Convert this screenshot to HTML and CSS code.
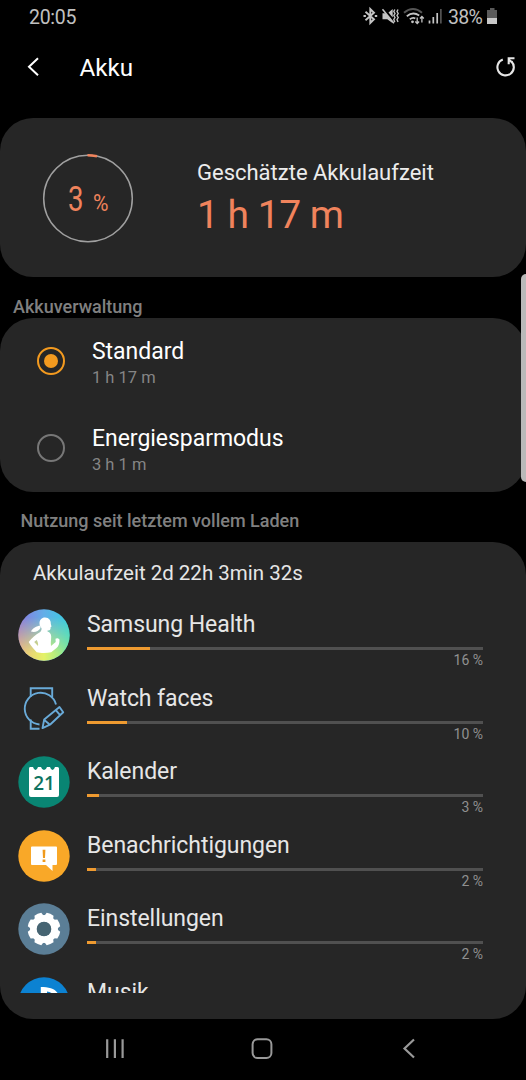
FILE: index.html
```html
<!DOCTYPE html>
<html lang="de">
<head>
    <meta charset="UTF-8">
    <meta name="viewport" content="width=device-width, initial-scale=1.0">
    <title>Akku</title>
    <link rel="stylesheet" href="styles.css">
</head>
<body>
    <div class="statusbar">
        <span class="clock">20:05</span>
        <svg class="status-icons" width="80" height="20" viewBox="0 0 80 20" fill="none" stroke="#c4c4c4">
            <!-- bluetooth -->
            <path d="M3.500 5.800 12 13.200 8.300 17V3l3.700 3.800-8.500 7.400" stroke-width="1.900"/>
            <path d="M1.500 8.900h2.400v2.200H1.500zM12.800 8.900h2.400v2.200h-2.400z" fill="#c4c4c4" stroke="none"/>
            <!-- muted, vibrating -->
            <path d="M20.500 7.300h3l7.200 8.200v1.800l-5.400-4h-4.800zM26.500 6.500l4.200-3.500v8.500z" fill="#c4c4c4" stroke="none"/>
            <path d="M20.500 3.300 32 17.200" stroke-width="1.500"/>
            <path d="m32.800 3.500-1 2 1.200 2-1.200 2 1.200 2-1.200 2 1 2.500M36 3.500l-1 2 1.200 2-1.200 2 1.200 2-1.200 2 1 2.500" stroke-width="1.400"/>
            <!-- wifi -->
            <path d="M42 6.800q9-7.500 18 0" stroke="#555" stroke-width="2"/>
            <path d="M44.800 10.200q6.200-5 12.400-.6M47.800 13.300q3-2.300 5.500-.8" stroke-width="1.800"/>
            <circle cx="50.500" cy="15.800" r="1.400" fill="#c4c4c4" stroke="none"/>
            <path d="M55.200 11.500v6M53.300 15.500l1.900 2 1.900-2M59.900 16.500v-6M58 12.500l1.900-2 1.900 2" stroke-width="1.300"/>
            <!-- signal -->
            <path d="M67.500 17.500v-3M71.300 17.500v-6.500M75.200 17.500V7" stroke-width="1.700"/>
            <path d="M78.900 17.500V3" stroke="#666" stroke-width="1.400"/>
        </svg>
        <span class="level">38%</span>
        <svg class="battery" width="10" height="16" viewBox="0 0 10 16">
            <path d="M3 0h4.500v2H10v8H0V2h3z" fill="#5a5a5a"/>
            <path d="M0 10h10v6H0z" fill="#c8c8c8"/>
        </svg>
    </div>

    <header class="header">
        <svg class="back" width="14" height="20" viewBox="0 0 14 20">
            <path d="M12 1.200 3 9.700l9 8.500" fill="none" stroke="#fff" stroke-width="2"/>
        </svg>
        <h1>Akku</h1>
        <svg class="reload" width="20" height="20" viewBox="0 0 20 20">
            <path d="M6.800 2.500A8.200 8.200 0 1 0 15.300 4.300" fill="none" stroke="#e6e6e6" stroke-width="2.100"/>
            <path d="M11.700 1.300h6.800M12.700.3v6.900M12.700 2.500l3.800 3.300" fill="none" stroke="#e6e6e6" stroke-width="2.100"/>
        </svg>
    </header>

    <section class="card summary">
        <svg class="ring" width="92" height="90" viewBox="0 0 92 90">
            <ellipse cx="46" cy="45.500" rx="44.300" ry="43.200" fill="none" stroke="#a0a0a0" stroke-width="1.500"/>
            <path d="M45.500 2.300q4.500 0 9.500 1" fill="none" stroke="#f0835c" stroke-width="2.600"/>
            <text x="26" y="57.500" font-size="35" textLength="15.500" lengthAdjust="spacingAndGlyphs">3</text>
            <text x="51" y="57.500" font-size="23" textLength="15.500" lengthAdjust="spacingAndGlyphs">%</text>
        </svg>
        <div class="estimate">
            <p class="estimate-label">Geschätzte Akkulaufzeit</p>
            <p class="estimate-time">1 h 17 m</p>
        </div>
    </section>

    <h2 class="section-title">Akkuverwaltung</h2>
    <section class="card modes">
        <div class="mode">
            <span class="radio checked"></span>
            <div>
                <p class="mode-name">Standard</p>
                <p class="mode-time">1 h 17 m</p>
            </div>
        </div>
        <div class="mode">
            <span class="radio"></span>
            <div>
                <p class="mode-name">Energiesparmodus</p>
                <p class="mode-time">3 h 1 m</p>
            </div>
        </div>
    </section>

    <h2 class="section-title usage-title">Nutzung seit letztem vollem Laden</h2>
    <section class="card usage">
        <p class="runtime">Akkulaufzeit 2d 22h 3min 32s</p>
        <div class="apps">
            <div class="app">
                <svg class="icon" viewBox="0 0 52 52">
                    <defs>
                        <linearGradient id="sky" x1="0" y1="0" x2="1" y2="0">
                            <stop offset="0" stop-color="#8a78e0"/>
                            <stop offset=".5" stop-color="#63aee8"/>
                            <stop offset="1" stop-color="#35cfe2"/>
                        </linearGradient>
                        <linearGradient id="meadow" x1="0" y1="0" x2="1" y2="0">
                            <stop offset="0" stop-color="#f0bd7c"/>
                            <stop offset=".5" stop-color="#e4f268"/>
                            <stop offset="1" stop-color="#7ce69a"/>
                        </linearGradient>
                        <linearGradient id="fade" x1="0" y1="0" x2="0" y2="1">
                            <stop offset=".15" stop-color="#000"/>
                            <stop offset=".85" stop-color="#fff"/>
                        </linearGradient>
                        <mask id="lower"><path d="M0 0h52v52H0z" fill="url(#fade)"/></mask>
                    </defs>
                    <circle cx="26" cy="26" r="25.700" fill="url(#sky)"/>
                    <circle cx="26" cy="26" r="25.700" fill="url(#meadow)" mask="url(#lower)"/>
                    <!-- runner: head, ponytail, torso with both arms -->
                    <g fill="#fff">
                        <path d="M27 8.500c4.200 0 6 3 5.800 6.500l.7 2.500-.9.800c.2 2.500-.8 3.500-3.400 3.200l-5-1.500c-1.500-2-2.700-3.500-2.700-5.500 0-3.500 2.200-6 5.500-6z"/>
                        <path d="M22.500 16.500c-4 .5-8 2.500-9.500 6 3.500 1.200 7.500 0 9.500-3.500z"/>
                        <path fill-rule="evenodd" d="M23.500 17h6v5.500c2.500 1 3.700 2.500 3.700 5 0 3.500-.7 6-.2 9.500l4.700-4-.2-3.200q2-1.500 4 .6c0 4-.7 6.500-3 8.500l-5.300 4.300c-4.500 1-10.500 1-14.500 0-3-3-6-6.500-8-10.200 3.300-4.300 7-7.500 10.800-9.500 2-1 2.500-3.500 2-6.500zM18.700 31l-2.500 2 3.800 4c.5-2-.2-4-1.300-6z"/>
                    </g>
                </svg>
                <div class="app-body">
                    <p class="app-name">Samsung Health</p>
                    <div class="bar"><div class="fill" style="width: 16%"></div></div>
                    <p class="percent">16 %</p>
                </div>
            </div>
            <div class="app">
                <svg class="icon" viewBox="0 0 52 52" fill="none" stroke="#69aad8" stroke-width="1.900">
                    <path d="M12.700 14V5.300h21.500V14M12.700 36.500v9.300H21.500"/>
                    <path d="M21.500 41.500A15.900 15.900 0 1 1 38 21.500"/>
                    <path d="m41.500 24 3.700 5.300-12.700 12-8 3.800 1.700-8.700zM38 27.300l4.300 5M26.300 37l5.700 4.700" stroke-linejoin="round"/>
                </svg>
                <div class="app-body">
                    <p class="app-name">Watch faces</p>
                    <div class="bar"><div class="fill" style="width: 10%"></div></div>
                    <p class="percent">10 %</p>
                </div>
            </div>
            <div class="app">
                <svg class="icon" viewBox="0 0 52 52">
                    <circle cx="26" cy="26" r="25.700" fill="#098573"/>
                    <path d="M12 11h3q1 3 2.500 3t2.500-3h3q1 3 3 3t3-3h3q1 3 2.500 3t2.500-3h2.500q1.500 0 1.500 1.500v26.500q0 2-2 2H13q-2 0-2-2V12.500q0-1.500 1-1.500z" fill="#fff"/>
                    <text class="day" x="26" y="34" text-anchor="middle">21</text>
                </svg>
                <div class="app-body">
                    <p class="app-name">Kalender</p>
                    <div class="bar"><div class="fill" style="width: 3%"></div></div>
                    <p class="percent">3 %</p>
                </div>
            </div>
            <div class="app">
                <svg class="icon" viewBox="0 0 52 52">
                    <circle cx="26" cy="26" r="25.700" fill="#f9a828"/>
                    <path d="M14 16.500h24q1 0 1 1V34q0 1-1 1h-3.500v6L28 35H14q-1 0-1-1V17.500q0-1 1-1z" fill="#fff"/>
                    <path d="M24.600 19.800h2.800l-.4 8.200h-2zM24.600 29.500h2.800v2.600h-2.800z" fill="#f09a1c"/>
                </svg>
                <div class="app-body">
                    <p class="app-name">Benachrichtigungen</p>
                    <div class="bar"><div class="fill" style="width: 2.200%"></div></div>
                    <p class="percent">2 %</p>
                </div>
            </div>
            <div class="app">
                <svg class="icon" viewBox="0 0 52 52">
                    <circle cx="26" cy="26" r="25.700" fill="#5b7e96"/>
                    <circle cx="26" cy="26" r="10.500" fill="none" stroke="#fff" stroke-width="7"/>
                    <g fill="#fff">
                        <path id="tooth" d="M21.300 13.500 22.300 10q3.700-.9 7.400 0l1 3.500z" transform="rotate(22.500 26 26)"/>
                        <use href="#tooth" transform="rotate(45 26 26)"/>
                        <use href="#tooth" transform="rotate(90 26 26)"/>
                        <use href="#tooth" transform="rotate(135 26 26)"/>
                        <use href="#tooth" transform="rotate(180 26 26)"/>
                        <use href="#tooth" transform="rotate(225 26 26)"/>
                        <use href="#tooth" transform="rotate(270 26 26)"/>
                        <use href="#tooth" transform="rotate(315 26 26)"/>
                    </g>
                    <circle cx="26" cy="26" r="7.300" fill="#466472"/>
                </svg>
                <div class="app-body">
                    <p class="app-name">Einstellungen</p>
                    <div class="bar"><div class="fill" style="width: 2.200%"></div></div>
                    <p class="percent">2 %</p>
                </div>
            </div>
            <div class="app">
                <svg class="icon" viewBox="0 0 52 52">
                    <circle cx="26" cy="26" r="25.700" fill="#0c82d2"/>
                    <path d="M22.800 34V10c9 0 16 2 18.200 9h-4.500c-1.500-2.500-4-4-7.500-4.500v19.500z" fill="#fff"/>
                </svg>
                <div class="app-body">
                    <p class="app-name">Musik</p>
                    <div class="bar"><div class="fill" style="width: 2%"></div></div>
                </div>
            </div>
        </div>
    </section>

    <nav class="navbar">
        <svg width="20" height="22" viewBox="0 0 20 22">
            <path d="M2.200 1.200v18.800M9.900 1.200v18.800M17.600 1.200v18.800" stroke="#999" stroke-width="2.200"/>
        </svg>
        <svg width="22" height="22" viewBox="0 0 22 22">
            <rect x="1.600" y="1.200" width="18.800" height="18.800" rx="5" fill="none" stroke="#999" stroke-width="2"/>
        </svg>
        <svg width="14" height="22" viewBox="0 0 14 22">
            <path d="M12 1.500 2.500 10.500l9.500 9" fill="none" stroke="#999" stroke-width="2.200"/>
        </svg>
    </nav>

    <div class="edge-handle"></div>
</body>
</html>
```

FILE: styles.css
```css
* {
    box-sizing: border-box;
}

body {
    margin: 0;
    width: 526px;
    height: 1080px;
    overflow: hidden;
    position: relative;
    background-color: #000;
    color: #fff;
    font-family: Roboto, "Noto Sans", sans-serif;
}

h1, h2, p {
    margin: 0;
    font-weight: 400;
    white-space: nowrap;
}

.statusbar {
    height: 33px;
    padding: 1px 29px 0 29px;
    display: flex;
    align-items: center;
    color: #c0c0c0;
    font-size: 19.500px;
}

.clock {
    letter-spacing: -0.3px;
}

.status-icons {
    margin-left: auto;
    margin-right: 6px;
    margin-top: -2px;
}

.level {
    letter-spacing: -0.7px;
}

.battery {
    margin-left: 5px;
    margin-top: -2px;
}

.header {
    height: 67px;
    padding-left: 26px;
    padding-right: 10.500px;
    display: flex;
    align-items: center;
}

.header h1 {
    margin-left: 39.500px;
    font-size: 24.200px;
    line-height: 28px;
    padding-top: 2px;
}

.reload {
    margin-left: auto;
}

.card {
    background-color: #262626;
    border-radius: 33px;
}

.summary {
    height: 159px;
    margin-top: 18px;
    padding-left: 42.200px;
    display: flex;
    align-items: center;
}

.ring text {
    fill: #f0835c;
}

.estimate {
    margin-left: 62.800px;
    padding-top: 5px;
}

.estimate-label {
    font-size: 22px;
    line-height: 30px;
    color: #ececec;
}

.estimate-time {
    font-size: 39px;
    line-height: 54px;
    letter-spacing: -0.500px;
    color: #f0835c;
}

.section-title {
    height: 41px;
    padding: 18px 0 0 13px;
    font-size: 18px;
    font-weight: 500;
    line-height: 24px;
    color: #808080;
}

.modes {
    height: 173.500px;
}

.mode {
    height: 87px;
    padding: 19px 0 0 37px;
    display: flex;
    gap: 27px;
}

.mode-name {
    font-size: 23px;
    line-height: 29px;
    letter-spacing: -0.04px;
}

.mode-time {
    font-size: 16.500px;
    line-height: 23px;
    color: #858585;
}

.radio {
    width: 28px;
    height: 28px;
    margin-top: 10px;
    border: 2px solid #777;
    border-radius: 50%;
    display: grid;
    place-items: center;
}

.radio.checked {
    border-color: #f39a1f;
}

.radio.checked::after {
    content: "";
    width: 14px;
    height: 14px;
    border-radius: 50%;
    background-color: #f39a1f;
}

.usage-title {
    height: 50.500px;
    padding: 17px 0 0 20.500px;
}

.usage {
    height: 476.500px;
    padding-top: 19px;
}

.runtime {
    padding-left: 33px;
    font-size: 20.500px;
    line-height: 25px;
    color: #e6e6e6;
}

.apps {
    height: 407px;
    padding-top: 23px;
    overflow: hidden;
}

.app {
    height: 73.500px;
    padding-left: 17.500px;
    display: flex;
    gap: 17.500px;
}

.icon {
    width: 52px;
    height: 52px;
    flex: none;
}

.day {
    font-family: "Open Sans", sans-serif;
    font-size: 19px;
    font-weight: 600;
    fill: #0d7360;
}

.app-body {
    width: 396px;
}

.app-name {
    padding-top: 1px;
    font-size: 23px;
    line-height: 30px;
    letter-spacing: -0.06px;
    color: #e6e6e6;
}

.bar {
    height: 3px;
    margin-top: 7px;
    background-color: #505050;
}

.fill {
    height: 100%;
    background-color: #ee9a30;
}

.percent {
    font-size: 14px;
    line-height: 20px;
    text-align: right;
    color: #909090;
}

.navbar {
    height: 61px;
    padding-left: 105px;
    display: grid;
    grid-template-columns: 146px 151px auto;
    align-items: center;
}

/* edge panel handle, lies over the cards */
.edge-handle {
    position: absolute;
    top: 274px;
    right: -6px;
    width: 11px;
    height: 208px;
    border-radius: 5px;
    background-color: #b9b9b9;
}
```
